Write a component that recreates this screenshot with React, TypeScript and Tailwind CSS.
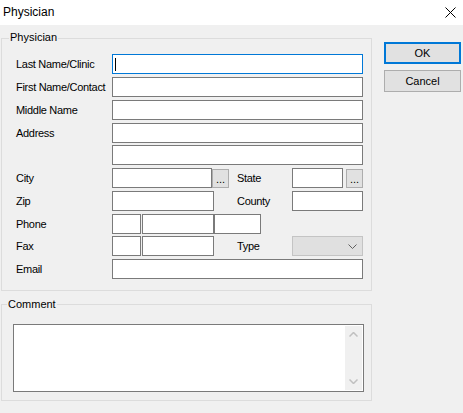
import React from 'react';

const font = { fontFamily: '"Liberation Sans", Arial, sans-serif' };

function Box({ className = '' }: { className?: string }) {
  return <div className={`h-[20px] bg-white border border-[#7a7a7a] ${className}`} />;
}

function DotsButton() {
  return (
    <div className="h-[19px] w-[17px] bg-[#e1e1e1] border border-[#adadad] flex items-end justify-center text-[11px] leading-[13px] pb-[1px] text-black">
      ...
    </div>
  );
}

function Label({ children, w = 'w-[96px]' }: { children?: React.ReactNode; w?: string }) {
  return (
    <div className={`${w} shrink-0 text-[11px] leading-[13px] tracking-[-0.3px] text-black pt-[1px]`}>{children}</div>
  );
}

function Row({ children, mt = 'mt-[3px]' }: { children: React.ReactNode; mt?: string }) {
  return <div className={`flex items-center h-[20px] ${mt}`}>{children}</div>;
}

export default function App() {
  return (
    <div className="w-[463px] h-[413px] overflow-hidden bg-[#f0f0f0] flex flex-col" style={font}>
      {/* title bar */}
      <div className="h-[25px] bg-white flex items-center justify-between pl-[3px] pr-[7px] shrink-0">
        <span className="text-[12px] leading-[15px] text-black">Physician</span>
        <svg width="11" height="11" viewBox="0 0 11 11" className="mt-[-1px]">
          <path d="M0.5 0.5 L10.5 10.5 M10.5 0.5 L0.5 10.5" stroke="#000" strokeWidth="1" />
        </svg>
      </div>

      <div className="flex items-start">
        {/* left column */}
        <div className="pl-[1px] w-[372px] shrink-0">
          <div className="relative mt-[13px] h-[253px] border border-[#dcdcdc] pt-[15px] pl-[14px]">
            <span className="absolute left-[7px] -top-[9px] px-[1px] bg-[#f0f0f0] text-[11px] leading-[14px] text-black">
              Physician
            </span>

            <Row mt="mt-0">
              <Label>Last Name/Clinic</Label>
              <div className="h-[20px] w-[251px] bg-white border border-[#0078d7] flex items-center pl-[2px]">
                <div className="w-[1px] h-[13px] bg-black" />
              </div>
            </Row>
            <Row>
              <Label>First Name/Contact</Label>
              <Box className="w-[251px]" />
            </Row>
            <Row>
              <Label>Middle Name</Label>
              <Box className="w-[251px]" />
            </Row>
            <Row>
              <Label>Address</Label>
              <Box className="w-[251px]" />
            </Row>
            <Row mt="mt-[2px]">
              <Label />
              <Box className="w-[251px]" />
            </Row>
            <Row>
              <Label>City</Label>
              <Box className="w-[100px]" />
              <DotsButton />
              <div className="w-[8px]" />
              <Label w="w-[55px]">State</Label>
              <Box className="w-[51px]" />
              <div className="w-[3px]" />
              <DotsButton />
            </Row>
            <Row>
              <Label>Zip</Label>
              <Box className="w-[102px]" />
              <div className="w-[23px]" />
              <Label w="w-[55px]">County</Label>
              <Box className="w-[71px]" />
            </Row>
            <Row>
              <Label>Phone</Label>
              <Box className="w-[29px]" />
              <div className="w-[1px]" />
              <Box className="w-[72px]" />
              <Box className="w-[47px]" />
            </Row>
            <Row mt="mt-[2px]">
              <Label>Fax</Label>
              <Box className="w-[29px]" />
              <div className="w-[1px]" />
              <Box className="w-[72px]" />
              <div className="w-[23px]" />
              <Label w="w-[55px]">Type</Label>
              <div className="h-[20px] w-[71px] bg-[#e0e0e0] border border-[#c4c4c4] flex items-center justify-end pr-[5px]">
                <svg width="9" height="5" viewBox="0 0 9 5">
                  <path d="M0.5 0.5 L4.5 4.5 L8.5 0.5" stroke="#606060" strokeWidth="1" fill="none" />
                </svg>
              </div>
            </Row>
            <Row>
              <Label>Email</Label>
              <Box className="w-[251px]" />
            </Row>
          </div>

          <div className="relative mt-[13px] h-[97px] border border-[#dcdcdc] pt-[19px] pl-[11px]">
            <span className="absolute left-[5px] -top-[8px] px-[1px] bg-[#f0f0f0] text-[11px] leading-[14px] text-black">
              Comment
            </span>
            <div className="w-[351px] h-[68px] bg-white border border-[#7a7a7a] flex justify-end p-[1px]">
              <div className="w-[17px] h-full bg-[#f0f0f0] flex flex-col items-center justify-between py-[6px]">
                <svg width="9" height="5" viewBox="0 0 9 5">
                  <path d="M0.5 4.5 L4.5 0.5 L8.5 4.5" stroke="#c0c0c0" strokeWidth="1.5" fill="none" />
                </svg>
                <svg width="9" height="5" viewBox="0 0 9 5">
                  <path d="M0.5 0.5 L4.5 4.5 L8.5 0.5" stroke="#c0c0c0" strokeWidth="1.5" fill="none" />
                </svg>
              </div>
            </div>
          </div>
        </div>

        {/* buttons */}
        <div className="ml-[12px] mt-[17px] flex flex-col gap-[6px]">
          <button className="w-[77px] h-[22px] bg-[#e1e1e1] border-2 border-[#0078d7] text-[11px] leading-[13px] text-black">
            OK
          </button>
          <button className="w-[77px] h-[22px] bg-[#e1e1e1] border border-[#adadad] text-[11px] leading-[13px] text-black">
            Cancel
          </button>
        </div>
      </div>
    </div>
  );
}
